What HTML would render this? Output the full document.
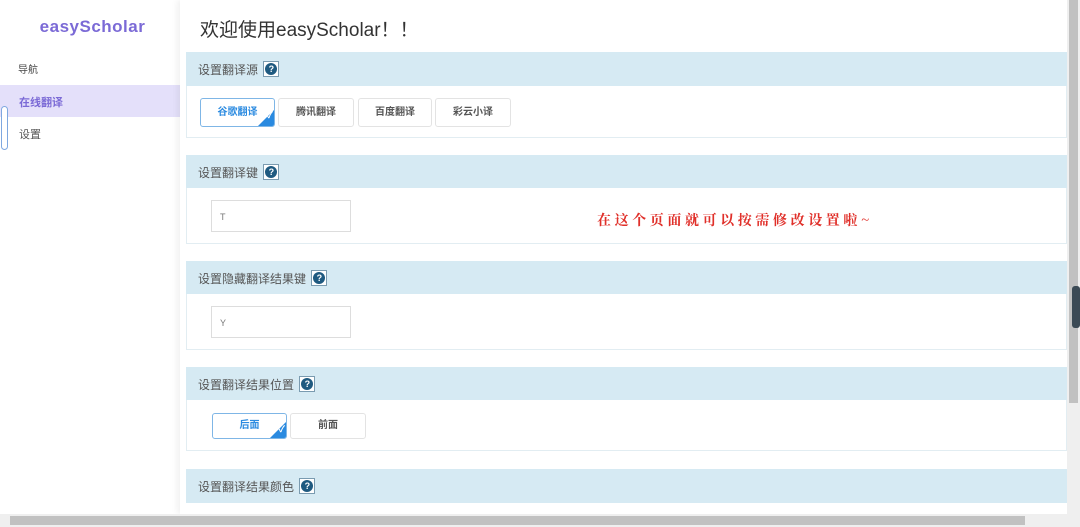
<!DOCTYPE html>
<html><head><meta charset="utf-8"><style>
*{margin:0;padding:0;box-sizing:border-box}
body{width:1080px;height:527px;overflow:hidden;background:#fff;font-family:"Liberation Sans","Noto Sans CJK SC",sans-serif;position:relative}
.side{position:absolute;left:0;top:0;width:180px;height:514px;background:#fff}
.logo{position:absolute;left:0;width:185px;top:17px;text-align:center;color:#7b6ad6;font-weight:bold;font-size:17px;letter-spacing:.5px}
.nav{position:absolute;left:18px;top:61px;font-size:10px;color:#444}
.act{position:absolute;left:0;top:85px;width:180px;height:32px;background:#e4e0fa;color:#7b6ad6;font-size:11px;font-weight:bold;padding:9px 0 0 19px}
.set{position:absolute;left:19px;top:126px;font-size:11px;color:#555}
.tab{position:absolute;left:1px;top:106px;width:7px;height:44px;border:1px solid #7fa8e0;border-radius:4px;background:#fff}
.main{position:absolute;left:180px;top:0;width:887px;height:514px;box-shadow:-3px 0 6px rgba(0,0,0,.06)}
h1{position:absolute;left:20px;top:15px;font-size:19px;font-weight:normal;color:#333}
.hd{position:absolute;left:6px;width:881px;height:34px;background:#d6eaf3;font-size:12px;color:#555;padding:9px 0 0 12px}
.bd{position:absolute;left:6px;width:881px;background:#fff;border:1px solid #e2edf2;border-top:none}
.q{display:inline-block;width:16px;height:16px;border:1px solid #7a9bb0;background:#fff;vertical-align:-3px;margin-left:2px;position:relative}
.q:after{content:"?";position:absolute;left:1px;top:1px;width:12px;height:12px;border-radius:50%;background:#1f5a80;color:#fff;font-size:9px;font-weight:bold;text-align:center;line-height:12px}
.btn{position:absolute;height:29px;border:1px solid #e3e3e3;border-radius:3px;font-size:10px;font-weight:bold;color:#555;text-align:center;line-height:27px;background:#fff}
.btn.on{border-color:#7fb6e6;color:#2a8ae0;overflow:hidden}
.btn.on:after{content:"";position:absolute;right:0;bottom:0;border-left:16px solid transparent;border-bottom:16px solid #2a8ae0}
.btn.on:before{content:"✓";position:absolute;right:1px;bottom:-3px;color:#fff;font-size:9px;z-index:2}
.inp{position:absolute;left:24px;width:140px;height:32px;border:1px solid #ddd;font-size:9px;color:#777;padding:11px 0 0 8px}
.vs{position:absolute;left:1067px;top:0;width:13px;height:514px;background:#efefef}
.vt{position:absolute;left:1069px;top:0;width:9px;height:403px;background:#c1c1c1}
.hs{position:absolute;left:0;top:514px;width:1080px;height:13px;background:#efefef}
.ht{position:absolute;left:10px;top:516px;width:1015px;height:9px;background:#c1c1c1}
</style></head><body>
<div class="side">
<div class="logo">easyScholar</div>
<div class="nav">导航</div>
<div class="act">在线翻译</div>
<div class="set">设置</div>
</div>
<div class="tab"></div>
<div class="main">
<h1>欢迎使用easyScholar！！</h1>
<div class="hd" style="top:52px">设置翻译源 <span class="q"></span></div>
<div class="bd" style="top:86px;height:52px">
<div class="btn on" style="left:13px;top:12px;width:75px">谷歌翻译</div>
<div class="btn" style="left:91px;top:12px;width:76px">腾讯翻译</div>
<div class="btn" style="left:171px;top:12px;width:74px">百度翻译</div>
<div class="btn" style="left:248px;top:12px;width:76px">彩云小译</div>
</div>
<div class="hd" style="top:155px">设置翻译键 <span class="q"></span></div>
<div class="bd" style="top:188px;height:56px">
<div class="inp" style="top:12px">T</div>
<div style="position:absolute;left:410px;top:22px;color:#e0302a;font-size:14px;font-weight:bold;font-family:'Noto Serif CJK SC',serif;letter-spacing:3.6px">在这个页面就可以按需修改设置啦~</div>
</div>
<div class="hd" style="top:261px">设置隐藏翻译结果键 <span class="q"></span></div>
<div class="bd" style="top:294px;height:56px"><div class="inp" style="top:12px">Y</div></div>
<div class="hd" style="top:367px">设置翻译结果位置 <span class="q"></span></div>
<div class="bd" style="top:400px;height:51px">
<div class="btn on" style="left:25px;top:13px;width:75px;height:26px;line-height:24px">后面</div>
<div class="btn" style="left:103px;top:13px;width:76px;height:26px;line-height:24px">前面</div>
</div>
<div class="hd" style="top:469px">设置翻译结果颜色 <span class="q"></span></div>
</div>
<div class="vs"></div><div class="vt"></div>
<div style="position:absolute;left:1072px;top:286px;width:8px;height:42px;background:#3b4a55;border-radius:3px"></div>
<div class="hs"></div><div class="ht"></div>
</body></html>
